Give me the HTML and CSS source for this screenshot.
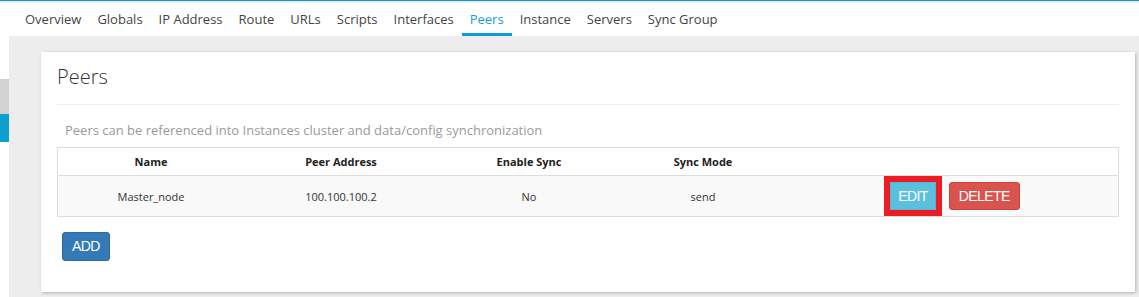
FILE: index.html
```html
<!DOCTYPE html>
<html lang="en">
<head>
  <meta charset="UTF-8" />
  <title>Peers</title>
  <link rel="stylesheet" href="styles.css">
</head>
<body>
  <nav class="tabs">
    <a class="tab">Overview</a>
    <a class="tab">Globals</a>
    <a class="tab">IP Address</a>
    <a class="tab">Route</a>
    <a class="tab">URLs</a>
    <a class="tab">Scripts</a>
    <a class="tab">Interfaces</a>
    <a class="tab active">Peers</a>
    <a class="tab">Instance</a>
    <a class="tab">Servers</a>
    <a class="tab">Sync Group</a>
  </nav>

  <div class="main">
    <aside class="sidebar">
      <div class="side-item"></div>
      <div class="side-item active"></div>
    </aside>

    <div class="content">
      <section class="panel">
        <h2 class="panel-title">Peers</h2>
        <p class="hint">Peers can be referenced into Instances cluster and data/config synchronization</p>

        <table class="peers">
          <thead>
            <tr>
              <th class="col-name">Name</th>
              <th class="col-addr">Peer Address</th>
              <th class="col-sync">Enable Sync</th>
              <th class="col-mode">Sync Mode</th>
              <th></th>
            </tr>
          </thead>
          <tbody>
            <tr>
              <td>Master_node</td>
              <td>100.100.100.2</td>
              <td>No</td>
              <td>send</td>
              <td>
                <div class="row-actions">
                  <button class="btn btn-info marked">EDIT</button>
                  <button class="btn btn-danger">DELETE</button>
                </div>
              </td>
            </tr>
          </tbody>
        </table>

        <div class="panel-foot">
          <button class="btn btn-primary">ADD</button>
        </div>
      </section>
    </div>
  </div>
</body>
</html>
```

FILE: styles.css
```css
html, body {
  margin: 0;
  padding: 0;
  height: 297px;
  overflow: hidden;
  font-family: 'Open Sans', 'Noto Sans', sans-serif;
  color: #333;
  background: #fff;
}

/* top tab strip */
.tabs {
  display: flex;
  height: 36px;
  box-sizing: border-box;
  padding-left: 17px;
  border-top: 1px solid #0b9ad3;
  background: #fff;
  box-shadow: inset 0 3px 3px -2px rgba(0, 0, 0, 0.15);
}

.tab {
  padding: 5px 8px 0;
  line-height: 27px;
  font-size: 13px;
  color: #444;
  border-bottom: 3px solid transparent;
  cursor: pointer;
}

.tab.active {
  color: #1a9bd7;
  border-bottom-color: #0e9bd3;
}

.main {
  display: flex;
  height: 261px;
}

.sidebar {
  width: 9px;
  padding-top: 43px;
  background: #fff;
}

.side-item {
  height: 35px;
  background: #d2d2d2;
}

.side-item.active {
  height: 28px;
  background: #0c9fd0;
}

.content {
  flex: 1;
  background: #ededed;
  padding: 16px 4px 5px 32px;
}

.panel {
  background: #fff;
  padding: 0 16px 31px;
  box-shadow: 1px 1px 3px rgba(0, 0, 0, 0.25);
}

.panel-title {
  margin: 0;
  padding: 10px 0 12px;
  font-size: 20px;
  font-weight: 300;
  line-height: 30px;
  color: #333;
  border-bottom: 1px solid #eee;
}

.hint {
  margin: 15px 0 7px;
  padding-left: 8px;
  font-size: 13px;
  line-height: 20px;
  color: #9a9a9a;
}

/* peers table */
.peers {
  width: 100%;
  border-collapse: collapse;
  border: 1px solid #ddd;
  font-size: 11px;
  text-align: center;
}

.peers th {
  height: 27px;
  padding: 0;
  font-weight: bold;
  color: #222;
  border-bottom: 1px solid #ddd;
}

.peers td {
  height: 40px;
  padding: 0;
  background: #f9f9f9;
}

.col-name { width: 186px; }
.col-addr { width: 194px; }
.col-sync { width: 182px; }
.col-mode { width: 166px; }

.row-actions {
  display: flex;
  justify-content: center;
  gap: 13px;
  padding-left: 6px;
}

.btn {
  font-family: 'Liberation Sans', Arial, sans-serif;
  font-size: 14px;
  letter-spacing: -0.6px;
  color: #fff;
  line-height: 26px;
  padding: 0 9px;
  border: 1px solid transparent;
  border-radius: 3px;
  cursor: pointer;
}

.btn-info {
  background: #5bc0de;
  border-color: #46b8da;
  padding: 0 7px;
}

.btn-danger {
  background: #d9534f;
  border-color: #d43f3a;
}

.btn-primary {
  background: #337ab7;
  border-color: #2e6da4;
  line-height: 27px;
}

/* red highlight around the edit button */
.marked {
  outline: 6px solid #ed1c24;
  border-radius: 0;
}

.panel-foot {
  margin-top: 15px;
  padding-left: 5px;
}
```
